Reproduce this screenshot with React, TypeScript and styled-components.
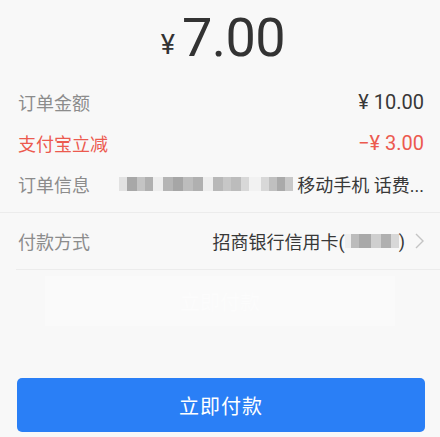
import React from "react";
import styled, { createGlobalStyle } from "styled-components";

const Global = createGlobalStyle`
  html, body { margin: 0; padding: 0; background: #f8f8f8; }
  body { font-family: Roboto, "Noto Sans CJK SC", sans-serif; }
`;

const Page = styled.div`
  width: 440px;
  height: 437px;
  background: #f8f8f8;
  display: flex;
  flex-direction: column;
  overflow: hidden;
`;

const AmountBar = styled.div`
  height: 70px;
  display: flex;
  justify-content: center;
  align-items: flex-end;
  gap: 7px;
  color: #333;
  padding-left: 6px;
`;

const Yen = styled.span`
  font-family: Roboto, "Noto Sans CJK SC", sans-serif;
  font-size: 27px;
  line-height: 1;
  margin-bottom: 11px;
`;

const Big = styled.span`
  font-family: Roboto, sans-serif;
  font-size: 54px;
  line-height: 1;
  margin-bottom: 5px;
  letter-spacing: -0.5px;
`;

const Details = styled.div`
  padding-top: 11px;
  display: flex;
  flex-direction: column;
`;

const Row = styled.div<{ $h?: number }>`
  height: ${(p) => p.$h ?? 41}px;
  display: flex;
  align-items: center;
  justify-content: space-between;
  padding: 0 16px 0 18px;
  font-size: 18px;
  font-family: "Noto Sans CJK SC", sans-serif;
`;

const Label = styled.span<{ $red?: boolean }>`
  color: ${(p) => (p.$red ? "#ec5a4f" : "#8c8c8c")};
  white-space: nowrap;
`;

const Value = styled.span<{ $red?: boolean; $num?: boolean }>`
  color: ${(p) => (p.$red ? "#ec5a4f" : "#383838")};
  font-family: Roboto, "Noto Sans CJK SC", sans-serif;
  font-size: ${(p) => (p.$num ? 20 : 18)}px;
  white-space: nowrap;
  display: flex;
  align-items: center;
`;

const Divider = styled.div<{ $inset?: number }>`
  height: 1px;
  background: #ececec;
  margin-left: ${(p) => p.$inset ?? 0}px;
`;

const Mosaic = styled.span`
  display: inline-flex;
  align-items: center;
  height: 18px;
`;

const Cell = styled.span<{ $w: number; $c: string }>`
  display: inline-block;
  width: ${(p) => p.$w}px;
  height: 14px;
  background: ${(p) => p.$c};
`;

const Chevron = styled.svg`
  margin-left: 10px;
`;

const Ghost = styled.div`
  margin: 6px 45px 0;
  height: 50px;
  background: #fafafa;
  display: flex;
  align-items: center;
  justify-content: center;
  color: #fcfcfc;
  font-size: 20px;
  font-family: "Noto Sans CJK SC", sans-serif;
`;

const Footer = styled.div`
  flex: 1;
  display: flex;
  align-items: flex-end;
  padding: 0 15px 5px 17px;
`;

const PayButton = styled.button`
  width: 100%;
  height: 54px;
  border: none;
  border-radius: 5px;
  background: #2a7ff6;
  color: #fff;
  font-size: 20px;
  font-family: "Noto Sans CJK SC", sans-serif;
  letter-spacing: 1px;
`;

const blocks1: [number, string][] = [
  [8, "#e2e2e2"], [10, "#a8a8a8"], [8, "#c4c4c4"], [8, "#b0b0b0"], [10, "#eeeeee"],
  [10, "#b5b5b5"], [10, "#a6a6a6"], [10, "#bdbdbd"], [10, "#b0b0b0"], [10, "#eeeeee"],
  [10, "#b8b8b8"], [8, "#c7c7c7"], [10, "#bcbcbc"], [8, "#d8d8d8"], [12, "#f2f2f2"],
  [8, "#d8d8d8"], [8, "#c0c0c0"], [8, "#aaaaaa"], [8, "#c8c8c8"],
];

const blocks2: [number, string][] = [
  [6, "#eeeeee"], [8, "#bcbcbc"], [12, "#a9a9a9"], [10, "#cfcfcf"], [10, "#b0b0b0"], [8, "#d8d8d8"],
];

export default function App() {
  return (
    <Page>
      <Global />
      <AmountBar>
        <Yen>¥</Yen>
        <Big>7.00</Big>
      </AmountBar>
      <Details>
        <Row>
          <Label>订单金额</Label>
          <Value $num>¥ 10.00</Value>
        </Row>
        <Row>
          <Label $red>支付宝立减</Label>
          <Value $num $red>−¥ 3.00</Value>
        </Row>
        <Row>
          <Label>订单信息</Label>
          <Value>
            <Mosaic>
              {blocks1.map(([w, c], i) => (
                <Cell key={i} $w={w} $c={c} />
              ))}
            </Mosaic>
            &nbsp;移动手机 话费...
          </Value>
        </Row>
        <Divider style={{ marginTop: 8 }} />
        <Row $h={56}>
          <Label>付款方式</Label>
          <Value>
            招商银行信用卡(
            <Mosaic>
              {blocks2.map(([w, c], i) => (
                <Cell key={i} $w={w} $c={c} />
              ))}
            </Mosaic>
            )
            <Chevron width="9" height="16" viewBox="0 0 9 16">
              <path d="M1 1l7 7-7 7" fill="none" stroke="#c4c4c4" strokeWidth="1.4" />
            </Chevron>
          </Value>
        </Row>
        <Divider $inset={16} />
      </Details>
      <Ghost>立即付款</Ghost>
      <Footer>
        <PayButton>立即付款</PayButton>
      </Footer>
    </Page>
  );
}
